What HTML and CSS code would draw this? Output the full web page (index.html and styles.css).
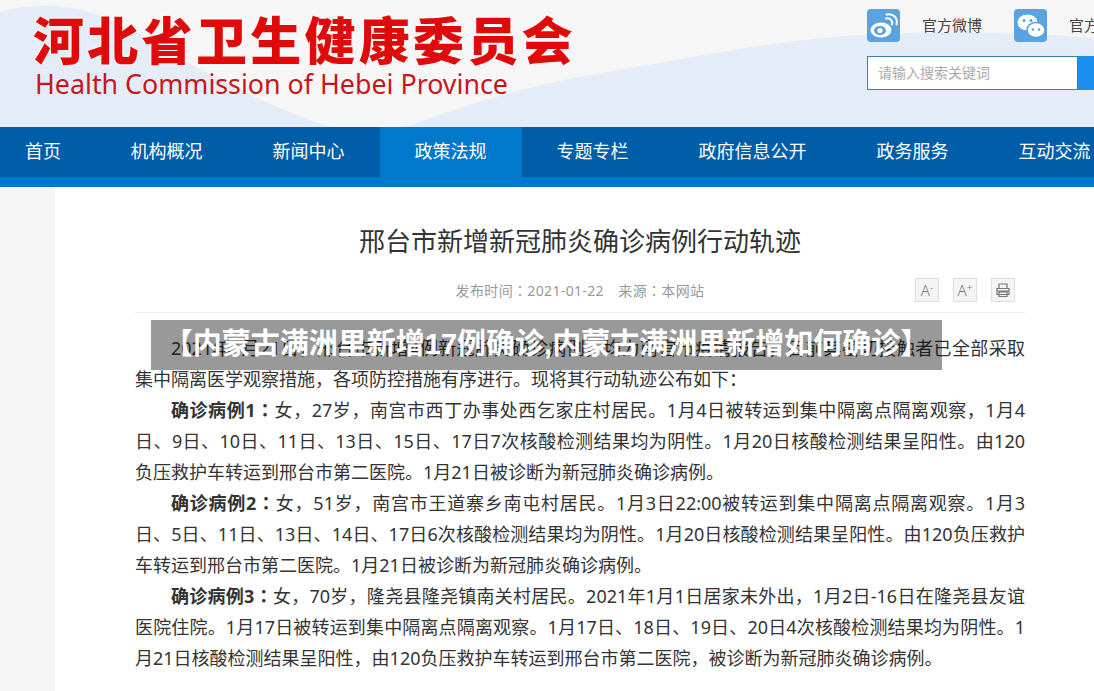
FILE: index.html
```html
<!DOCTYPE html>
<html lang="zh-CN">
<head>
  <meta charset="UTF-8" />
  <title>邢台市新增新冠肺炎确诊病例行动轨迹</title>
  <link rel="stylesheet" href="styles.css">
</head>
<body>
  <header class="header">
    <svg class="header-bg" viewBox="0 0 1094 127" preserveAspectRatio="none">
      <path d="M0 12C40 0 90 4 140 34C190 64 250 100 330 127L0 127Z" fill="#e4edf7"/>
      <path d="M405 127C480 100 540 82 620 70C720 52 800 36 900 33C980 31 1050 34 1094 38L1094 127Z" fill="#e4edf7"/>
    </svg>
    <div class="logo">
      <div class="logo-cn">河北省卫生健康委员会</div>
      <div class="logo-en">Health Commission of Hebei Province</div>
    </div>
    <div class="tools">
      <div class="social">
        <a class="social-item">
          <span class="social-icon">
            <svg viewBox="0 0 33 33" width="33" height="33">
              <ellipse cx="14" cy="21" rx="10.500" ry="7.500" fill="#fff"/>
              <ellipse cx="13" cy="21.500" rx="6" ry="4.500" fill="#5aa3e0"/>
              <circle cx="13" cy="21.500" r="2.600" fill="#fff"/>
              <path d="M19 9.500c4-1 7 2 6 6M19.500 5.500c7-1.500 11.500 3.500 10 10" fill="none" stroke="#fff" stroke-width="2" stroke-linecap="round"/>
            </svg>
          </span>
          <span class="social-label">官方微博</span>
        </a>
        <a class="social-item">
          <span class="social-icon">
            <svg viewBox="0 0 33 33" width="33" height="33">
              <ellipse cx="13.500" cy="13.500" rx="10.500" ry="8.500" fill="#fff" stroke="#5aa3e0"/>
              <ellipse cx="22" cy="21" rx="9" ry="7.500" fill="#fff" stroke="#5aa3e0" stroke-width="1.500"/>
              <circle cx="10" cy="11.500" r="1.500" fill="#5aa3e0"/>
              <circle cx="17" cy="11.500" r="1.500" fill="#5aa3e0"/>
              <circle cx="19" cy="20.500" r="1.300" fill="#5aa3e0"/>
              <circle cx="25" cy="20.500" r="1.300" fill="#5aa3e0"/>
            </svg>
          </span>
          <span class="social-label">官方微信</span>
        </a>
      </div>
      <div class="search">
        <input class="search-input" type="text" placeholder="请输入搜索关键词">
        <button class="search-btn"></button>
      </div>
    </div>
  </header>

  <nav class="nav">
    <div class="nav-list">
      <a class="nav-item first">首页</a>
      <a class="nav-item">机构概况</a>
      <a class="nav-item">新闻中心</a>
      <a class="nav-item active">政策法规</a>
      <a class="nav-item">专题专栏</a>
      <a class="nav-item">政府信息公开</a>
      <a class="nav-item">政务服务</a>
      <a class="nav-item">互动交流</a>
    </div>
  </nav>

  <main class="page">
    <article class="article">
      <h1 class="article-title">邢台市新增新冠肺炎确诊病例行动轨迹</h1>
      <div class="meta">
        <span></span>
        <span class="meta-text">发布时间：2021-01-22　来源：本网站</span>
        <div class="meta-tools">
          <button class="tool-btn">A<sup>-</sup></button>
          <button class="tool-btn">A<sup>+</sup></button>
          <button class="tool-btn">
            <svg viewBox="0 0 16 16" width="16" height="16" fill="none" stroke="#777" stroke-width="1.200">
              <path d="M4 6V2h8v4M2 6.500h12v6H2zM4 10h8v4.500H4zM2 9h12"/>
            </svg>
          </button>
        </div>
      </div>
      <div class="content">
        <p>2021年1月21日，邢台市新增4例新冠肺炎确诊病例，均为南宫市疫情报告，目前其密切接触者已全部采取集中隔离医学观察措施，各项防控措施有序进行。现将其行动轨迹公布如下：</p>
        <p><strong>确诊病例1：</strong>女，27岁，南宫市西丁办事处西乞家庄村居民。1月4日被转运到集中隔离点隔离观察，1月4日、9日、10日、11日、13日、15日、17日7次核酸检测结果均为阴性。1月20日核酸检测结果呈阳性。由120<span class="nowrap">负压</span>救护车转运到邢台市第二医院。1月21日被诊断为新冠肺炎确诊病例。</p>
        <p><strong>确诊病例2：</strong>女，51岁，南宫市王道寨乡南屯村居民。1月3日22:00被转运到集中隔离点隔离观察。1月3日、5日、11日、13日、14日、17日6次核酸检测结果均为阴性。1月20日核酸检测结果呈阳性。由120负压救护车转运到邢台市第二医院。1月21日被诊断为新冠肺炎确诊病例。</p>
        <p><strong>确诊病例3：</strong>女，70岁，隆尧县隆尧镇南关村居民。2021年1月1日居家未外出，1月2日-16日在隆尧县友谊医院住院。1月17日被转运到集中隔离点隔离观察。1月17日、18日、19日、20日4次核酸检测结果均为阴性。1月21日核酸检测结果呈阳性，由120负压救护车转运到邢台市第二医院，被诊断为新冠肺炎确诊病例。</p>
      </div>
    </article>
  </main>

  <div class="overlay">【内蒙古满洲里新增17例确诊,内蒙古满洲里新增如何确诊】</div>
</body>
</html>
```
FILE: styles.css
```css
html, body {
  height: 691px;
  overflow: hidden;
}

body {
  margin: 0;
  position: relative;
  background: #f5f5f5;
  color: #333;
  font-family: "Liberation Sans", "Noto Sans CJK SC", sans-serif;
}

.header {
  position: relative;
  display: flex;
  height: 127px;
  background: #f6f6f6;
  overflow: hidden;
}

.header-bg {
  position: absolute;
  left: 0;
  top: 0;
  width: 100%;
  height: 100%;
}

.logo {
  position: relative;
  width: 834px;
  padding: 8px 0 0 33px;
  flex-shrink: 0;
}

.logo-cn {
  color: #e00a0a;
  font-family: "Noto Sans CJK SC", sans-serif;
  font-size: 51px;
  font-weight: 900;
  line-height: 60px;
  letter-spacing: 3.300px;
  white-space: nowrap;
  text-shadow: 0 0 3px #fff;
}

.logo-en {
  margin: 0 0 0 2px;
  color: #c8161d;
  font-family: "Noto Sans", sans-serif;
  font-size: 26.800px;
  line-height: 32px;
  white-space: nowrap;
}

.tools {
  position: relative;
  padding-top: 9px;
  flex-shrink: 0;
}

.social {
  display: flex;
  height: 47px;
}

.social-item {
  display: flex;
  width: 147px;
  height: 33px;
  align-items: center;
}

.social-icon {
  display: block;
  width: 33px;
  height: 33px;
  margin-right: 22px;
  border-radius: 4px;
  background: #5aa3e0;
}

.social-label {
  padding-bottom: 3px;
  font-size: 15px;
  color: #444;
  white-space: nowrap;
}

.search {
  display: flex;
  height: 34px;
}

.search-input {
  box-sizing: border-box;
  width: 211px;
  height: 34px;
  padding: 0 10px;
  border: 1px solid #3c80a8;
  background: #fff;
  font-family: inherit;
  font-size: 14px;
}

.search-input::placeholder {
  color: #aaa;
}

.search-btn {
  width: 60px;
  height: 34px;
  border: none;
  background: #1a8ff0;
}

.nav {
  height: 50px;
  border-bottom: 10px solid #0078cc;
  background: #005ea8;
  overflow: hidden;
}

.nav-list {
  display: flex;
  width: 1200px;
}

.nav-item {
  padding: 0 35px;
  color: #fff;
  font-size: 18px;
  line-height: 51px;
  white-space: nowrap;
}

.nav-item.first {
  padding-left: 25px;
  padding-right: 34.600px;
}

.nav-item.active {
  background: #0078cc;
}

.page {
  padding-left: 55px;
}

.article {
  box-sizing: border-box;
  width: 1050px;
  height: 504px;
  padding: 31px 80px 0;
  background: #fff;
}

.article-title {
  margin: 0;
  color: #333;
  font-size: 26px;
  font-weight: 400;
  line-height: 48px;
  text-align: center;
}

.meta {
  display: grid;
  grid-template-columns: 1fr auto 1fr;
  align-items: center;
  height: 44px;
  margin-top: 2px;
  border-bottom: 1px solid #eee;
}

.meta-text {
  color: #999;
  font-family: "Noto Sans", "Noto Sans CJK TC", sans-serif;
  font-feature-settings: "locl" 0;
  font-size: 14px;
  letter-spacing: 0.350px;
}

.meta-tools {
  display: flex;
  justify-content: flex-end;
  gap: 14px;
  padding-right: 10px;
}

.tool-btn {
  display: flex;
  align-items: center;
  justify-content: center;
  width: 24px;
  height: 24px;
  padding: 0;
  border: 1px solid #ddd;
  background: #f4f4f4;
  color: #777;
  font-family: "Noto Sans", sans-serif;
  font-size: 15px;
  font-weight: 300;
}

.tool-btn sup {
  font-size: 10px;
  line-height: 1;
  margin-bottom: 6px;
}

.content {
  padding-top: 20px;
  color: #333;
  font-family: "Noto Sans", "Noto Sans CJK SC", sans-serif;
  font-size: 18px;
  line-height: 31px;
  text-align: justify;
}

.content p {
  margin: 0;
  text-indent: 2em;
}

.content strong {
  font-family: "Noto Sans", "Noto Sans CJK TC", sans-serif;
  font-feature-settings: "locl" 0;
  font-weight: 700;
}

.nowrap {
  white-space: nowrap;
}

.overlay {
  position: absolute;
  left: 151px;
  top: 320px;
  width: 791px;
  height: 50px;
  background: rgba(0, 0, 0, 0.4);
  color: #fff;
  font-size: 29px;
  font-weight: 700;
  line-height: 49px;
  text-align: center;
  white-space: nowrap;
}
```
